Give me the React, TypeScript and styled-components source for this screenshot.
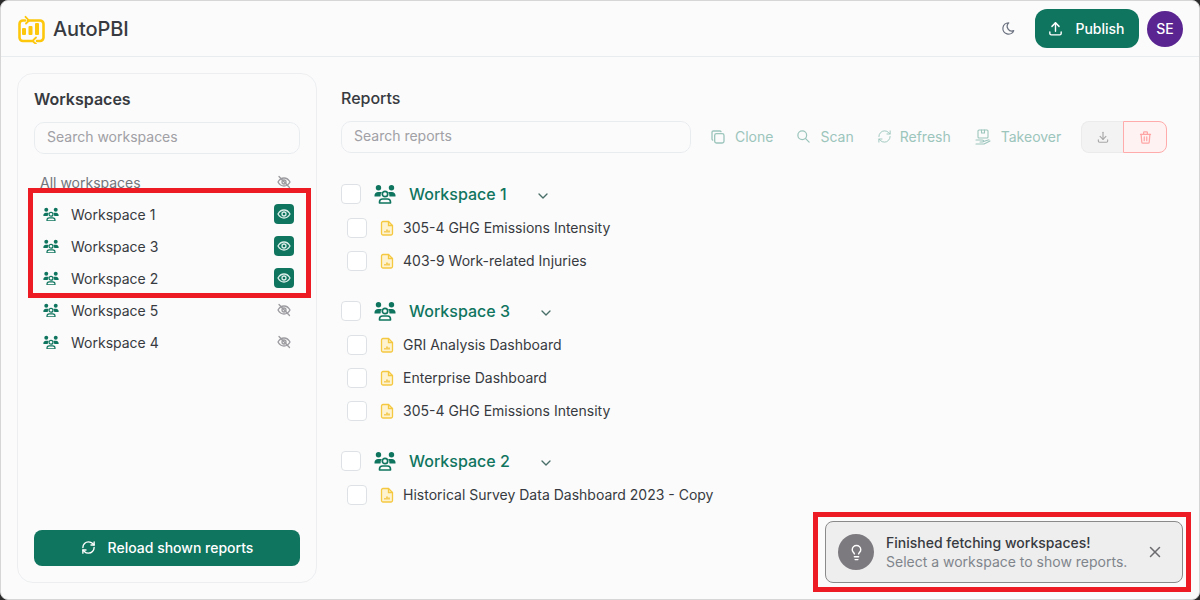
import styled, { createGlobalStyle } from 'styled-components';
import { Lightbulb, RefreshCw } from 'lucide-react';
import {
  TbChevronDown,
  TbCopy,
  TbDownload,
  TbMoon,
  TbSearch,
  TbTrash,
  TbUpload,
  TbX,
} from 'react-icons/tb';

const green = '#10755f';
const text = '#373a40';

const workspaces = [
  { name: 'Workspace 1', shown: true },
  { name: 'Workspace 3', shown: true },
  { name: 'Workspace 2', shown: true },
  { name: 'Workspace 5', shown: false },
  { name: 'Workspace 4', shown: false },
];

const groups = [
  { name: 'Workspace 1', reports: ['305-4 GHG Emissions Intensity', '403-9 Work-related Injuries'] },
  { name: 'Workspace 3', reports: ['GRI Analysis Dashboard', 'Enterprise Dashboard', '305-4 GHG Emissions Intensity'] },
  { name: 'Workspace 2', reports: ['Historical Survey Data Dashboard 2023 - Copy'] },
];

const Logo = () => (
  <svg width="30" height="30" viewBox="0 0 30 30" fill="none" stroke="#fdc70c" strokeWidth="2.6" strokeLinecap="round" strokeLinejoin="round">
    <path d="M9 6.500H7A3.500 3.500 0 0 0 3.500 10v13.500A3.500 3.500 0 0 0 7 27h9" />
    <path d="M12 6.500h12a3.500 3.500 0 0 1 3.500 3.500v13.500A3.500 3.500 0 0 1 24 27h-3" />
    <path d="M9.500 2.800 13 6.500l-3 3M20 23.500 16.500 27l3.500 3" strokeWidth="1.800" />
    <rect x="6" y="14" width="4" height="7" rx="1" fill="#fdc70c" stroke="none" />
    <rect x="12.500" y="12" width="4" height="9" rx="1" fill="#fdc70c" stroke="none" />
    <rect x="19" y="9" width="4" height="12" rx="1" fill="#fdc70c" stroke="none" />
  </svg>
);

const GroupIcon = ({ size }: { size: number }) => (
  <svg width={size} height={(size * 20) / 22} viewBox="0 0 22 20" fill="none">
    <circle cx="4.500" cy="3.800" r="2.700" fill={green} />
    <circle cx="17.500" cy="3.800" r="2.700" fill={green} />
    <path d="M0.500 12.500v-1.200c0-2 1.700-3.300 3.500-3.300h2.500c.5 0 1 .1 1.400.3-.9.8-1.300 2-1.200 3.200.1.300-.1 1-.6 1H0.500zM21.500 12.500v-1.200c0-2-1.700-3.300-3.500-3.300h-2.500c-.5 0-1 .1-1.400.3.900.8 1.300 2 1.200 3.200-.1.300.1 1 .6 1h5.600z" fill={green} />
    <circle cx="11" cy="10" r="2.700" stroke={green} strokeWidth="1.700" />
    <path d="M5.500 19v-1a3 3 0 0 1 3-3h5a3 3 0 0 1 3 3v1z" stroke={green} strokeWidth="1.600" strokeLinejoin="round" />
  </svg>
);

const EyeGlyph = ({ crossed }: { crossed?: boolean }) => (
  <svg width="14" height="14" viewBox="0 0 14 14" fill="none" stroke="currentColor" strokeWidth="1.300" strokeLinecap="round">
    <path d="M1 7c1.500-2.700 3.500-4 6-4s4.500 1.300 6 4c-1.500 2.700-3.500 4-6 4s-4.500-1.300-6-4z" />
    <circle cx="7" cy="7" r="2" />
    {crossed && <path d="M2 1.500l10.500 11" />}
  </svg>
);

const FileIcon = () => (
  <svg width="14" height="16" viewBox="0 0 14 16" fill="none">
    <path d="M3 1.500h5.500L12.500 5.500v8a1.500 1.500 0 0 1-1.500 1.500H3a1.500 1.500 0 0 1-1.500-1.500v-10.500A1.500 1.500 0 0 1 3 1.500z" fill="#fdf3d0" stroke="#f5c842" strokeWidth="1.300" />
    <path d="M8.500 1.500v4h4" stroke="#f5c842" strokeWidth="1.300" />
    <path d="M5 12.500v-1.500M7 12.500v-3M9 12.500v-2" stroke="#eeb40f" strokeWidth="1.200" />
  </svg>
);

const TakeoverIcon = () => (
  <svg width="18" height="18" viewBox="0 0 18 18" fill="none" stroke="currentColor" strokeWidth="1.100" strokeLinecap="round" strokeLinejoin="round">
    <rect x="4" y="2" width="10" height="8" rx="1" />
    <path d="M7.500 2v3h3V2" />
    <path d="M2 12h6.500a1 1 0 0 1 0 2H6M9.500 13.500 15 11.800M2 16h8l6-3" />
  </svg>
);

export default function App() {
  return (
    <>
      <GlobalStyle />
      <Frame>
        <Header>
          <Brand>
            <Logo />
            <BrandName>AutoPBI</BrandName>
          </Brand>
          <HeaderActions>
            <ThemeToggle>
              <TbMoon size={15} />
            </ThemeToggle>
            <PublishButton>
              <TbUpload size={17} />
              Publish
            </PublishButton>
            <Avatar>SE</Avatar>
          </HeaderActions>
        </Header>
        <Main>
          <Sidebar>
            <SidebarTitle>Workspaces</SidebarTitle>
            <SearchBox>Search workspaces</SearchBox>
            <WorkspaceList>
              <AllRow>
                All workspaces
                <HiddenMark>
                  <EyeGlyph crossed />
                </HiddenMark>
              </AllRow>
              {workspaces.map((w) => (
                <WorkspaceRow key={w.name}>
                  <GroupIcon size={16} />
                  <WorkspaceName>{w.name}</WorkspaceName>
                  {w.shown ? (
                    <ShownMark>
                      <EyeGlyph />
                    </ShownMark>
                  ) : (
                    <HiddenMark>
                      <EyeGlyph crossed />
                    </HiddenMark>
                  )}
                </WorkspaceRow>
              ))}
            </WorkspaceList>
            <ReloadButton>
              <RefreshCw size={15} strokeWidth={2.2} />
              Reload shown reports
            </ReloadButton>
          </Sidebar>
          <Content>
            <ContentTitle>Reports</ContentTitle>
            <Toolbar>
              <ReportSearch>Search reports</ReportSearch>
              <ToolButton><TbCopy size={16} />Clone</ToolButton>
              <ToolButton><TbSearch size={15} />Scan</ToolButton>
              <RefreshButton><RefreshCw size={15} strokeWidth={1.5} />Refresh</RefreshButton>
              <ToolButton><TakeoverIcon />Takeover</ToolButton>
              <IconPair>
                <DownloadCell><TbDownload size={14} /></DownloadCell>
                <DeleteCell><TbTrash size={15} /></DeleteCell>
              </IconPair>
            </Toolbar>
            {groups.map((g) => (
              <Group key={g.name}>
                <GroupRow>
                  <Check />
                  <GroupIcon size={22} />
                  <GroupName>{g.name}</GroupName>
                  <GroupChevron>
                    <TbChevronDown size={16} />
                  </GroupChevron>
                </GroupRow>
                {g.reports.map((r) => (
                  <ReportRow key={r}>
                    <Check />
                    <ReportIcon>
                      <FileIcon />
                    </ReportIcon>
                    <span>{r}</span>
                  </ReportRow>
                ))}
              </Group>
            ))}
          </Content>
        </Main>
        <Toast>
          <ToastIcon>
            <Lightbulb size={17} />
          </ToastIcon>
          <ToastBody>
            <ToastTitle>Finished fetching workspaces!</ToastTitle>
            <ToastText>Select a workspace to show reports.</ToastText>
          </ToastBody>
          <ToastClose>
            <TbX size={18} />
          </ToastClose>
        </Toast>
        <ListHighlight />
        <ToastHighlight />
      </Frame>
    </>
  );
}

const GlobalStyle = createGlobalStyle`
  html, body {
    margin: 0;
    height: 100%;
    background: #2b2b2b;
    font-family: Inter, "Liberation Sans", sans-serif;
  }
  * { box-sizing: border-box; }
`;

const Frame = styled.div`
  position: relative;
  width: 1200px;
  height: 600px;
  overflow: hidden;
  border: 1px solid #d6d6d6;
  border-radius: 8px;
  background: #fbfbfb;
  color: ${text};
  display: flex;
  flex-direction: column;
`;

const Header = styled.header`
  height: 56px;
  flex: none;
  display: flex;
  align-items: center;
  justify-content: space-between;
  padding: 0 16px 0 15px;
  border-bottom: 1px solid #e9ecef;
`;

const Brand = styled.div`
  display: flex;
  align-items: center;
  gap: 7px;
`;

const BrandName = styled.span`
  font-size: 20px;
  font-weight: 500;
  letter-spacing: -0.1px;
`;

const HeaderActions = styled.div`
  display: flex;
  align-items: center;
`;

const ThemeToggle = styled.span`
  display: flex;
  margin-right: 19px;
  color: #6c7280;
`;

const PublishButton = styled.div`
  width: 104px;
  height: 39px;
  border-radius: 12px;
  background: ${green};
  color: #fff;
  font-size: 14px;
  font-weight: 500;
  display: flex;
  align-items: center;
  justify-content: center;
  gap: 11px;
  padding: 0 2px 1px 0;
  margin-right: 8px;
`;

const Avatar = styled.div`
  width: 36px;
  height: 36px;
  border-radius: 50%;
  background: #5a2590;
  color: #fff;
  font-size: 14px;
  font-weight: 500;
  display: flex;
  align-items: center;
  justify-content: center;
`;

const Main = styled.main`
  flex: 1;
  display: flex;
  padding: 16px;
  gap: 24px;
`;

const Sidebar = styled.aside`
  width: 300px;
  height: 510px;
  border: 1px solid #eceef0;
  border-radius: 16px;
  padding: 15px 16px 16px;
  display: flex;
  flex-direction: column;
`;

const SidebarTitle = styled.h2`
  margin: 0 0 13px;
  font-size: 16px;
  line-height: 20px;
  font-weight: 600;
`;

const SearchBox = styled.div`
  height: 32px;
  border: 1px solid #e9ecef;
  border-radius: 10px;
  padding-left: 12px;
  font-size: 14px;
  line-height: 27px;
  color: #a0a0a5;
`;

const WorkspaceList = styled.div`
  flex: 1;
  margin-top: 12px;
`;

const AllRow = styled.div`
  height: 32px;
  padding: 0 6px;
  display: flex;
  align-items: center;
  justify-content: space-between;
  font-size: 14px;
  color: #72757c;
`;

const WorkspaceRow = styled.div`
  height: 32px;
  padding: 0 6px 0 9px;
  display: flex;
  align-items: center;
  font-size: 14px;
`;

const WorkspaceName = styled.span`
  margin-left: 12px;
  flex: 1;
`;

const HiddenMark = styled.span`
  width: 20px;
  display: flex;
  justify-content: center;
  color: #9b9ba0;
`;

const ShownMark = styled.span`
  width: 20px;
  height: 20px;
  border-radius: 4px;
  background: ${green};
  color: #dceeea;
  display: flex;
  align-items: center;
  justify-content: center;
`;

const ReloadButton = styled.div`
  height: 36px;
  border-radius: 8px;
  background: ${green};
  color: #fff;
  font-size: 14px;
  font-weight: 500;
  display: flex;
  align-items: center;
  justify-content: center;
  gap: 12px;
  padding-bottom: 1px;
`;

const Content = styled.section`
  flex: 1;
  padding-top: 15px;
  min-width: 0;
`;

const ContentTitle = styled.h2`
  margin: 0 0 13px;
  font-size: 16px;
  line-height: 20px;
  font-weight: 500;
`;

const Toolbar = styled.div`
  display: flex;
  align-items: center;
  height: 32px;
  margin-bottom: 24px;
`;

const ReportSearch = styled(SearchBox)`
  width: 350px;
  margin-right: 19px;
`;

const ToolButton = styled.div`
  display: flex;
  align-items: center;
  gap: 9px;
  margin-right: 23px;
  padding-bottom: 1px;
  font-size: 14px;
  color: #9cc5bc;
`;

const RefreshButton = styled(ToolButton)`
  gap: 8px;
`;

const IconPair = styled.div`
  display: flex;
  height: 32px;
  margin-left: -3px;
`;

const DownloadCell = styled.div`
  width: 42px;
  border: 1px solid #ebebeb;
  border-right: none;
  border-radius: 8px 0 0 8px;
  background: #f3f3f3;
  color: #a8a8a8;
  display: flex;
  align-items: center;
  justify-content: center;
`;

const DeleteCell = styled.div`
  width: 44px;
  border: 1px solid #ffabab;
  border-radius: 0 8px 8px 0;
  background: #fff2f2;
  color: #ffa5a5;
  display: flex;
  align-items: center;
  justify-content: center;
`;

const Group = styled.div`
  margin-bottom: 17px;
`;

const GroupRow = styled.div`
  height: 34px;
  display: flex;
  align-items: center;
  gap: 13px;
`;

const GroupName = styled.span`
  margin-right: 15px;
  padding-bottom: 1px;
  font-size: 16px;
  font-weight: 500;
  color: ${green};
`;

const GroupChevron = styled.span`
  display: flex;
  margin-top: 3px;
  color: #4a6f68;
`;

const Check = styled.span`
  width: 20px;
  height: 20px;
  border: 1px solid #dee2e6;
  border-radius: 4px;
  background: #fff;
  flex: none;
`;

const ReportRow = styled.div`
  height: 33px;
  padding-left: 6px;
  display: flex;
  align-items: center;
  font-size: 14px;
`;

const ReportIcon = styled.span`
  display: flex;
  margin: 1px 9px 0 13px;
`;

const Toast = styled.div`
  position: absolute;
  left: 824px;
  top: 520px;
  width: 358px;
  height: 62px;
  border: 1px solid #8a8a8a;
  border-radius: 8px;
  background: #eeeeee;
  display: flex;
  align-items: center;
  padding: 0 12px;
`;

const ToastIcon = styled.div`
  width: 36px;
  height: 36px;
  border-radius: 50%;
  background: #7d7a7f;
  color: #fff;
  display: flex;
  align-items: center;
  justify-content: center;
  flex: none;
`;

const ToastBody = styled.div`
  flex: 1;
  margin-left: 12px;
  padding-bottom: 1px;
  font-size: 14px;
  line-height: 19px;
`;

const ToastTitle = styled.div`
  font-weight: 500;
`;

const ToastText = styled.div`
  color: #80858c;
`;

const ToastClose = styled.span`
  display: flex;
  color: #6c6c70;
  margin-right: 6px;
`;

const ListHighlight = styled.div`
  position: absolute;
  left: 27px;
  top: 187px;
  width: 283px;
  height: 110px;
  border: 5px solid #ed1c24;
  pointer-events: none;
`;

const ToastHighlight = styled.div`
  position: absolute;
  left: 812px;
  top: 511px;
  width: 378px;
  height: 80px;
  border: 5px solid #ed1c24;
  pointer-events: none;
`;
